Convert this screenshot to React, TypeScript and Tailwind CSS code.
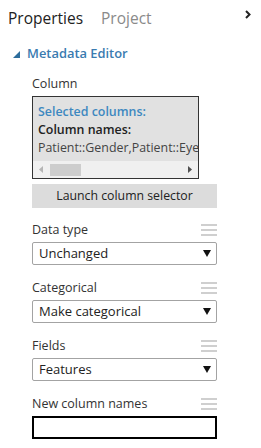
import React from "react";

function Grip() {
  return (
    <div className="flex flex-col gap-[3px] w-[16px]">
      <div className="h-[2px] bg-[#cfcfcf]" />
      <div className="h-[2px] bg-[#cfcfcf]" />
      <div className="h-[2px] bg-[#cfcfcf]" />
    </div>
  );
}

function FieldLabel({ text }: { text: string }) {
  return (
    <div className="mt-[13px] h-[20px] flex items-center justify-between">
      <span className="text-[12.5px] text-[#333]">{text}</span>
      <Grip />
    </div>
  );
}

function Select({ value }: { value: string }) {
  return (
    <div className="mt-[2px] h-[23px] border border-[#a3a3a3] rounded-[2px] flex items-center justify-between pl-[6px] pr-[5px]">
      <span className="text-[13px] text-[#222]">{value}</span>
      <svg width="8" height="7" viewBox="0 0 8 7">
        <path d="M0 0 H8 L4 7 Z" fill="#111" />
      </svg>
    </div>
  );
}

export default function App() {
  return (
    <main
      className="w-[261px] h-[448px] bg-white overflow-hidden"
      style={{ fontFamily: "'Open Sans', 'Noto Sans', sans-serif" }}
    >
      <header className="h-[38px] flex items-center pl-[8px] pr-[10px]">
        <span className="text-[15.5px] text-[#222]">Properties</span>
        <span className="text-[15.5px] text-[#8a8a8a] ml-[18px]">Project</span>
        <svg className="ml-auto mb-[10px]" width="6" height="9" viewBox="0 0 6 9">
          <path d="M1 1 L4.5 4.5 L1 8" stroke="#222" strokeWidth="2" fill="none" />
        </svg>
      </header>

      <div className="mt-[6px] h-[20px] flex items-center pl-[13px]">
        <svg width="7" height="7" viewBox="0 0 7 7">
          <path d="M7 0 V7 H0 Z" fill="#2d6d9c" />
        </svg>
        <span className="ml-[7px] text-[12.9px] font-semibold text-[#3a7bb0]">Metadata Editor</span>
      </div>

      <section className="pl-[32px] w-[217px]">
        <div className="mt-[10px] h-[20px] flex items-center text-[12.5px] text-[#333]">Column</div>

        <div className="mt-[2px] h-[83px] w-[167px] border border-[#333] bg-[#e1e1e1] flex flex-col">
          <div className="pt-[6px] pl-[5px] text-[12.4px] leading-[18px] overflow-hidden whitespace-nowrap">
            <div className="font-semibold text-[#3d88c0]">Selected columns:</div>
            <div className="font-semibold text-[#222]">Column names:</div>
            <div className="text-[#444]">Patient::Gender,Patient::EyeColor</div>
          </div>
          <div className="mt-auto h-[17px] bg-[#f0f0f0] flex items-center px-[6px]">
            <svg width="4" height="7" viewBox="0 0 4 7">
              <path d="M4 0 V7 L0 3.5 Z" fill="#b5b5b5" />
            </svg>
            <div className="ml-[7px] w-[31px] h-[12px] bg-[#cdcdcd]" />
            <svg className="ml-auto" width="4" height="7" viewBox="0 0 4 7">
              <path d="M0 0 V7 L4 3.5 Z" fill="#505050" />
            </svg>
          </div>
        </div>

        <div className="mt-[5px] h-[24px] bg-[#dcdcdc] flex items-center justify-center text-[12.3px] text-[#222]">
          Launch column selector
        </div>

        <div className="mt-[-1px]">
          <FieldLabel text="Data type" />
          <Select value="Unchanged" />
          <FieldLabel text="Categorical" />
          <Select value="Make categorical" />
          <FieldLabel text="Fields" />
          <Select value="Features" />
          <FieldLabel text="New column names" />
          <div className="mt-[2px] h-[23px] border-2 border-black" />
        </div>
      </section>
    </main>
  );
}
